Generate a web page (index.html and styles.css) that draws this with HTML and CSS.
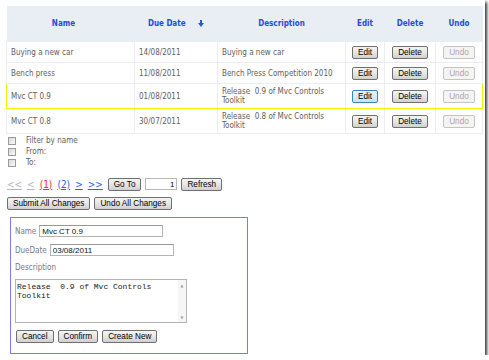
FILE: index.html
```html
<!DOCTYPE html>
<html lang="en">
<head>
  <meta charset="UTF-8" />
  <title>Tasks</title>
  <link rel="stylesheet" href="styles.css">
</head>
<body>
  <div class="frame">
    <table class="grid">
      <colgroup>
        <col style="width:128px"><col style="width:83px"><col style="width:128px">
        <col style="width:39px"><col style="width:51px"><col style="width:47px">
      </colgroup>
      <thead>
        <tr>
          <th><span class="sortable">Name</span><span class="sort-space"></span></th>
          <th><span class="sortable">Due Date</span>
            <svg class="sort-arrow" width="6" height="7" viewBox="0 0 6 7"><rect x="2" y="0" width="2" height="3" fill="#2a5bc0"/><path d="M0 3h6L3 7z" fill="#2a5bc0"/></svg>
          </th>
          <th>Description</th>
          <th>Edit</th>
          <th>Delete</th>
          <th>Undo</th>
        </tr>
      </thead>
      <tbody>
        <tr class="row">
          <td>Buying a new car</td>
          <td>14/08/2011</td>
          <td>Buying a new car</td>
          <td class="act"><button class="btn">Edit</button></td>
          <td class="act"><button class="btn">Delete</button></td>
          <td class="act"><button class="btn" disabled>Undo</button></td>
        </tr>
        <tr class="row">
          <td>Bench press</td>
          <td>11/08/2011</td>
          <td>Bench Press Competition 2010</td>
          <td class="act"><button class="btn">Edit</button></td>
          <td class="act"><button class="btn">Delete</button></td>
          <td class="act"><button class="btn" disabled>Undo</button></td>
        </tr>
        <tr class="row tall selected">
          <td>Mvc CT 0.9</td>
          <td>01/08/2011</td>
          <td>Release&nbsp; 0.9 of Mvc Controls Toolkit</td>
          <td class="act"><button class="btn focused">Edit</button></td>
          <td class="act"><button class="btn">Delete</button></td>
          <td class="act"><button class="btn" disabled>Undo</button></td>
        </tr>
        <tr class="row tall">
          <td>Mvc CT 0.8</td>
          <td>30/07/2011</td>
          <td>Release&nbsp; 0.8 of Mvc Controls Toolkit</td>
          <td class="act"><button class="btn">Edit</button></td>
          <td class="act"><button class="btn">Delete</button></td>
          <td class="act"><button class="btn" disabled>Undo</button></td>
        </tr>
      </tbody>
    </table>

    <div class="filters">
      <label class="filter"><input type="checkbox" class="check"> Filter by name</label>
      <label class="filter"><input type="checkbox" class="check"> From:</label>
      <label class="filter"><input type="checkbox" class="check"> To:</label>
    </div>

    <div class="pager">
      <a class="page off">&lt;&lt;</a>
      <a class="page off">&lt;</a>
      <a class="page current">(1)</a>
      <a class="page">(2)</a>
      <a class="page">&gt;</a>
      <a class="page">&gt;&gt;</a>
      <button class="btn">Go To</button>
      <input class="page-input" type="text" value="1">
      <button class="btn">Refresh</button>
    </div>

    <div class="actions">
      <button class="btn">Submit All Changes</button>
      <button class="btn">Undo All Changes</button>
    </div>

    <div class="editor">
      <div class="field">
        <span class="lbl">Name</span>
        <input class="txt" type="text" value="Mvc CT 0.9">
      </div>
      <div class="field">
        <span class="lbl">DueDate</span>
        <input class="txt" type="text" value="03/08/2011">
      </div>
      <div class="lbl desc-lbl">Description</div>
      <div class="area">
        <textarea class="area-text">Release  0.9 of Mvc Controls Toolkit</textarea>
        <div class="scroll"><span>&#9650;</span><span>&#9660;</span></div>
      </div>
      <div class="editor-buttons">
        <button class="btn">Cancel</button>
        <button class="btn">Confirm</button>
        <button class="btn">Create New</button>
      </div>
    </div>
  </div>
</body>
</html>
```

FILE: styles.css
```css
:root {
  --text: #5e5e5e;
  --head-bg: #e9edf4;
  --head-text: #2749e0;
  --line: #eaedf1;
}

body {
  margin: 0;
  background: #fff;
  font-family: "DejaVu Sans Condensed", "DejaVu Sans", sans-serif;
  font-stretch: condensed;
  font-size: 8px;
  color: var(--text);
}

.frame {
  width: 485px;
  height: 355px;
  box-sizing: border-box;
  padding: 6px;
  background: #fff;
  box-shadow: 2px 2px 3px rgba(0, 0, 0, 0.8);
}

.grid {
  width: 476px;
  border-collapse: collapse;
  table-layout: fixed;
}

.grid th {
  height: 35px;
  padding: 0;
  background: var(--head-bg);
  color: var(--head-text);
  font-weight: bold;
  text-align: center;
}

.sort-space {
  display: inline-block;
  width: 14px;
}

.sort-arrow {
  margin-left: 10px;
  vertical-align: -1px;
}

.grid td {
  padding: 0 4px;
  border: 1px solid var(--line);
  line-height: 9px;
}

.row {
  height: 21px;
}

.row.tall {
  height: 25px;
}

.row.selected td {
  border-top: 1px solid #f2f200;
  border-bottom: 1px solid #f2f200;
}

.row.selected td:first-child {
  border-left: 1px solid #f2f200;
}

.row.selected td:last-child {
  border-right: 1px solid #f2f200;
}

.grid td.act {
  text-align: center;
  padding: 0;
}

.btn {
  height: 13px;
  padding: 0 5px;
  border: 1px solid #707070;
  border-radius: 2px;
  background: linear-gradient(#f4f4f4, #e6e6e6 50%, #d0d0d0);
  font-family: "Liberation Sans", Arial, sans-serif;
  font-size: 8.2px;
  line-height: 11px;
  color: #000;
  vertical-align: middle;
}

.btn.focused {
  border-color: #3c84c0;
  background: linear-gradient(#e8f4fc, #c6e2f6);
}

.btn:disabled {
  border-color: #c4c4c4;
  background: #f4f4f4;
  color: #a8a8a8;
}

.filters {
  padding: 1px 0 0 2px;
}

.filter {
  display: flex;
  align-items: center;
  gap: 3px;
  height: 11px;
}

.check {
  appearance: none;
  width: 8px;
  height: 8px;
  margin: 0 7px 0 0;
  border: 1px solid #9a9a9a;
  background: linear-gradient(135deg, #d8d8d8, #fafafa);
}

.pager {
  display: flex;
  align-items: center;
  height: 14px;
  margin-top: 9px;
  padding-left: 1px;
  font-size: 10px;
}

.page {
  color: #2f5ee8;
  text-decoration: underline;
  margin-right: 5px;
}

.page.off {
  color: #b4b6c4;
}

.page.current {
  color: #ff2a2a;
}

.page-input {
  width: 32px;
  height: 12px;
  box-sizing: border-box;
  margin: 0 4px;
  padding: 0 2px;
  border: 1px solid #b8b8b8;
  font-family: "Liberation Sans", Arial, sans-serif;
  font-size: 8px;
  text-align: right;
}

.actions {
  display: flex;
  gap: 4px;
  margin-top: 6px;
  padding-left: 1px;
}

.editor {
  width: 238px;
  height: 137px;
  box-sizing: border-box;
  margin: 7px 0 0 4px;
  padding: 7px 4px 0;
  border: 1px solid #7b7bff;
  color: #7a7a7a;
}

.field {
  display: flex;
  align-items: center;
  gap: 3px;
  margin-bottom: 7px;
}

.txt {
  width: 124px;
  height: 12px;
  box-sizing: border-box;
  padding: 0 2px;
  border: 1px solid #b4b4b4;
  border-top-color: #9a9a9a;
  font-family: "Liberation Sans", Arial, sans-serif;
  font-size: 8px;
  color: #111;
}

.desc-lbl {
  margin-top: 3px;
}

.area {
  display: flex;
  width: 172px;
  height: 44px;
  box-sizing: border-box;
  margin-top: 7px;
  border: 1px solid #b4b4b4;
}

.area-text {
  flex: 1;
  border: none;
  padding: 2px 1px;
  resize: none;
  overflow: hidden;
  font-family: "Liberation Mono", "Courier New", monospace;
  font-size: 8px;
  line-height: 9px;
  color: #222;
}

.scroll {
  width: 8px;
  display: flex;
  flex-direction: column;
  justify-content: space-between;
  align-items: center;
  padding: 3px 0 2px;
  background: #f6f6f6;
  color: #9a9a9a;
  font-size: 4px;
}

.editor-buttons {
  display: flex;
  gap: 4px;
  margin-top: 7px;
  padding-left: 1px;
}
```
